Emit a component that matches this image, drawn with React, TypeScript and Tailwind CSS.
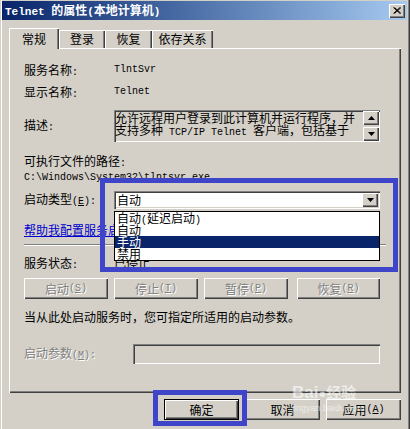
import React from 'react'

const mono = "font-['Liberation_Mono',monospace] text-[10px]"
const raised =
  'bg-[#d4d0c8] shadow-[inset_1px_1px_0_#ffffff,inset_-1px_-1px_0_#404040,inset_-2px_-2px_0_#808080]'
const sunken =
  'shadow-[inset_1px_1px_0_#808080,inset_2px_2px_0_#404040,inset_-1px_-1px_0_#ffffff,inset_-2px_-2px_0_#d4d0c8]'
const grayText = 'text-[#808080] [text-shadow:1px_1px_0_#ffffff]'

const L = ({ children }: { children: React.ReactNode }) => <span className={mono}>{children}</span>

const Arrow = ({ up }: { up?: boolean }) => (
  <svg width="7" height="4" viewBox="0 0 7 4">
    <polygon points={up ? '3.5,0 7,4 0,4' : '0,0 7,0 3.5,4'} fill="#000" />
  </svg>
)

const Tab = ({ label, w, active }: { label: string; w: string; active?: boolean }) => (
  <div
    className={`${w} flex justify-center bg-[#d4d0c8] shadow-[inset_1px_1px_0_#ffffff,inset_-1px_0_0_#404040,inset_-2px_0_0_#808080] ${
      active ? 'relative z-10 h-[21px] -mb-[1px] pt-[5px]' : 'h-[18px] pt-[3px]'
    }`}
  >
    <span className="leading-[12px]">{label}</span>
  </div>
)

const DisabledButton = ({ label, k, w }: { label: string; k: string; w: string }) => (
  <div className={`${w} h-[21px] ${raised} flex items-center justify-center ${grayText}`}>
    {label}
    <L>
      (<u>{k}</u>)
    </L>
  </div>
)

const App = () => {
  return (
    <div className="relative w-[410px] h-[429px] overflow-hidden bg-[#d4d0c8] font-['Noto_Sans_CJK_SC','Liberation_Sans',sans-serif] text-[12px] leading-[12px] text-black shadow-[inset_1px_0_0_#d4d0c8,inset_2px_0_0_#ffffff,inset_-1px_0_0_#404040,inset_-2px_0_0_#808080]">
      {/* title bar */}
      <div className="ml-[2px] mr-[3px] mt-[1px] h-[19px] flex items-center justify-between bg-gradient-to-r from-[#0a246a] to-[#a6caf0] pl-[3px] pr-[2px]">
        <div className="text-white font-bold leading-[12px]">
          <span className="font-['Liberation_Mono',monospace] text-[11px] font-bold">Telnet </span>
          的属性
          <span className="font-['Liberation_Mono',monospace] text-[11px] font-bold">(</span>
          本地计算机
          <span className="font-['Liberation_Mono',monospace] text-[11px] font-bold">)</span>
        </div>
        <div className={`w-[16px] h-[14px] ${raised} flex items-center justify-center`}>
          <svg width="8" height="7" viewBox="0 0 8 7">
            <path d="M0.5 0.5 L7 6.5 M1.5 0.5 L8 6.5 M7 0.5 L0.5 6.5 M8 0.5 L1.5 6.5" stroke="#000" strokeWidth="1" />
          </svg>
        </div>
      </div>

      {/* tabs */}
      <div className="mt-[8px] h-[20px] flex items-end pl-[9px]">
        <Tab label="常规" w="w-[50px]" active />
        <Tab label="登录" w="w-[46px]" />
        <Tab label="恢复" w="w-[47px]" />
        <Tab label="依存关系" w="w-[61px]" />
      </div>

      {/* tab panel */}
      <div className="ml-[9px] w-[392px] h-[345px] shadow-[inset_1px_1px_0_#ffffff,inset_-1px_-1px_0_#404040,inset_-2px_-2px_0_#808080] pl-[15px] flex flex-col">
        <div className="mt-[16px] h-[12px] flex">
          <div className="w-[90px]">
            服务名称<L>:</L>
          </div>
          <L>TlntSvr</L>
        </div>
        <div className="mt-[10px] h-[12px] flex">
          <div className="w-[90px]">
            显示名称<L>:</L>
          </div>
          <L>Telnet</L>
        </div>
        <div className="mt-[12px] h-[32px] flex items-center">
          <div className="w-[90px]">
            描述<L>:</L>
          </div>
          <div className={`w-[266px] h-[32px] bg-[#d4d0c8] ${sunken} flex`}>
            <div className="flex-1 pl-[1px] pt-[2px] leading-[12px]">
              <div>允许远程用户登录到此计算机并运行程序，并</div>
              <div>
                支持多种<L> TCP/IP Telnet </L>客户端，包括基于
              </div>
            </div>
            <div className="w-[17px] pr-[1px] pt-[1px] flex flex-col justify-between pb-[1px]">
              <div className={`h-[14px] ${raised} flex items-center justify-center`}>
                <Arrow up />
              </div>
              <div className={`h-[14px] ${raised} flex items-center justify-center`}>
                <Arrow />
              </div>
            </div>
          </div>
        </div>
        <div className="mt-[13px] h-[12px]">
          可执行文件的路径<L>:</L>
        </div>
        <div className="mt-[2px] h-[12px]">
          <L>C:\Windows\System32\tlntsvr.exe</L>
        </div>
        <div className="mt-[10px] h-[18px] flex items-center">
          <div className="w-[90px]">
            启动类型
            <L>
              (<u>E</u>):
            </L>
          </div>
          <div className={`w-[266px] h-[18px] bg-white ${sunken} flex items-center justify-between pl-[3px] pr-[2px]`}>
            <span>自动</span>
            <div className={`w-[16px] h-[14px] ${raised} flex items-center justify-center`}>
              <Arrow />
            </div>
          </div>
        </div>
        <div className="mt-[15px] h-[12px] text-[#0000cc] underline">帮助我配置服务启动选项。</div>
        <div className="mt-[8px] w-[362px] h-[2px] border-t border-t-[#808080] border-b border-b-white" />
        <div className="mt-[11px] h-[12px] flex">
          <div className="w-[90px]">
            服务状态<L>:</L>
          </div>
          <span>已停止</span>
        </div>
        <div className="mt-[9px] flex">
          <DisabledButton label="启动" k="S" w="w-[84px]" />
          <div className="ml-[6px]">
            <DisabledButton label="停止" k="T" w="w-[84px]" />
          </div>
          <div className="ml-[6px]">
            <DisabledButton label="暂停" k="P" w="w-[84px]" />
          </div>
          <div className="ml-[9px]">
            <DisabledButton label="恢复" k="R" w="w-[83px]" />
          </div>
        </div>
        <div className="mt-[12px] h-[12px]">当从此处启动服务时，您可指定所适用的启动参数。</div>
        <div className="mt-[21px] h-[20px] flex items-center">
          <div className={`w-[109px] ${grayText}`}>
            启动参数
            <L>
              (<u>M</u>):
            </L>
          </div>
          <div className={`w-[247px] h-[20px] bg-[#d4d0c8] ${sunken}`} />
        </div>
      </div>

      {/* dialog buttons */}
      <div className="mt-[6px] flex justify-end gap-[6px] pr-[9px]">
        <div className="w-[75px] h-[21px] bg-[#d4d0c8] shadow-[inset_0_0_0_1px_#000000,inset_2px_2px_0_#ffffff,inset_-2px_-2px_0_#404040,inset_-3px_-3px_0_#808080] flex items-center justify-center">
          确定
        </div>
        <div className={`w-[75px] h-[21px] ${raised} flex items-center justify-center`}>取消</div>
        <div className={`w-[75px] h-[21px] ${raised} flex items-center justify-center`}>
          应用
          <L>
            (<u>A</u>)
          </L>
        </div>
      </div>

      {/* open dropdown list */}
      <div className="absolute left-[114px] top-[211px] w-[266px] h-[50px] bg-white border border-black">
        <div className="h-[12px] pl-[2px]">
          自动<L>(</L>延迟启动<L>)</L>
        </div>
        <div className="h-[12px] pl-[2px]">自动</div>
        <div className="h-[12px] pl-[2px] bg-[#0a246a] text-white">手动</div>
        <div className="h-[12px] pl-[2px]">禁用</div>
      </div>

      {/* highlight boxes */}
      <div className="absolute left-[100px] top-[178px] w-[298px] h-[94px] border-[5px] border-[#3f45c9]" />
      <div className="absolute left-[153px] top-[390px] w-[94px] h-[36px] border-[5px] border-[#3f45c9]" />

      {/* watermark */}
      <div className="absolute left-[292px] top-[383px] text-white/60 pointer-events-none">
        <div className="text-[17px] leading-[18px] font-['Liberation_Sans',sans-serif] font-bold">
          Bai<span className="text-[13px]">●</span>
          <span className="font-['Noto_Sans_CJK_SC',sans-serif] text-[15px]">经验</span>
        </div>
        <div className="text-[9px] leading-[10px] font-['Liberation_Sans',sans-serif]">jingyan.baidu.com</div>
      </div>
    </div>
  )
}

export default App
